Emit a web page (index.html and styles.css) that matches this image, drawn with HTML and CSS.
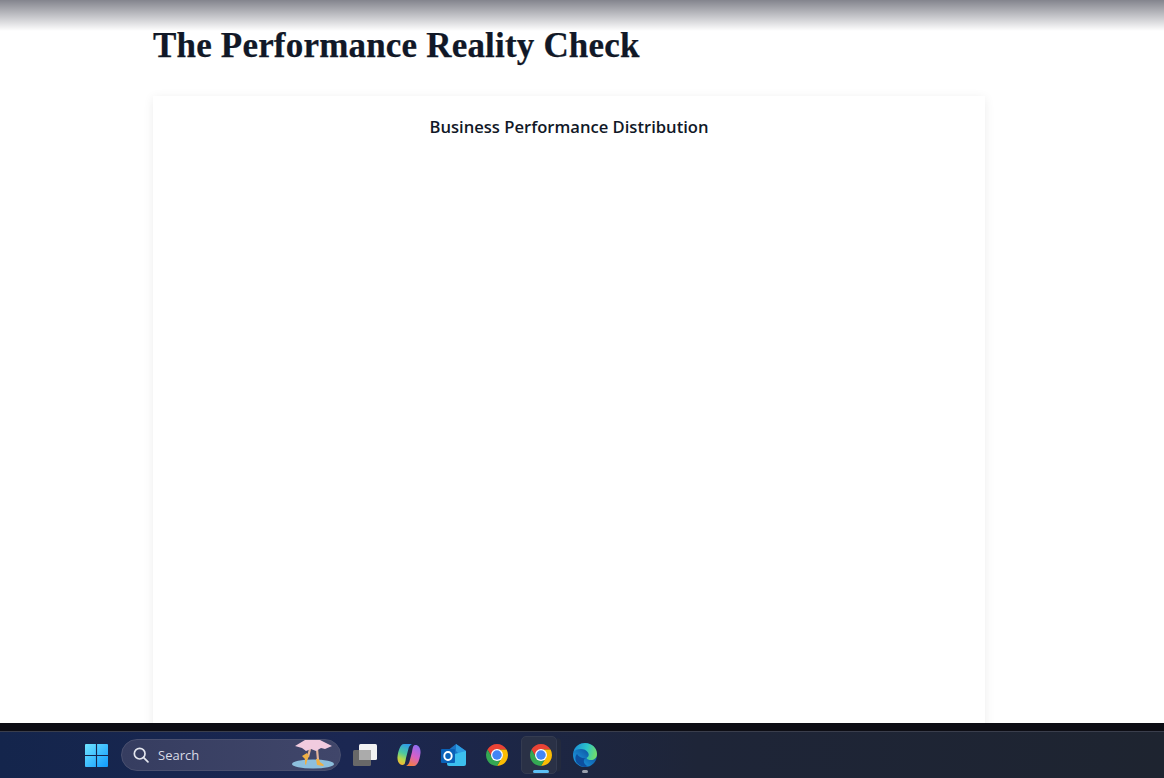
FILE: index.html
```html
<!DOCTYPE html>
<html lang="en">
<head>
    <meta charset="UTF-8">
    <meta name="viewport" content="width=device-width, initial-scale=1.0">
    <title>The Performance Reality Check</title>
    <link rel="stylesheet" href="styles.css">
</head>
<body>
    <div class="top-fade"></div>
    <main class="page">
        <h1 class="page-title">The Performance Reality Check</h1>
        <section class="chart-card">
            <h2 class="chart-title">Business Performance Distribution</h2>
        </section>
    </main>
    <div class="black-strip"></div>
    <footer class="taskbar">
        <svg class="win-logo" width="23" height="23" viewBox="0 0 24 24">
            <defs>
                <linearGradient id="winGrad" x1="0" y1="0" x2="1" y2="1">
                    <stop offset="0" stop-color="#6fe3ff"/>
                    <stop offset="1" stop-color="#0f9bff"/>
                </linearGradient>
            </defs>
            <path fill="url(#winGrad)" d="M0 1a1 1 0 0 1 1-1h10.400v11.400H0zM12.600 0H23a1 1 0 0 1 1 1v10.400H12.600zM0 12.600h11.400V24H1a1 1 0 0 1-1-1zM12.600 12.600H24V23a1 1 0 0 1-1 1H12.600z"/>
        </svg>
        <div class="search-box">
            <svg width="16" height="16" viewBox="0 0 18 18" fill="none" stroke="#e4e6ee" stroke-width="1.900">
                <circle cx="7.500" cy="7.500" r="6"/>
                <path d="M12 12 16.800 16.800" stroke-linecap="round"/>
            </svg>
            <span class="search-label">Search</span>
            <svg class="search-art" width="44" height="30" viewBox="0 0 44 30">
                <ellipse cx="21" cy="24" rx="21" ry="4.500" fill="#8dbfdd"/>
                <path d="M18 9 16 17M25 9l1 11" stroke="#e2b49a" stroke-width="2.200" fill="none"/>
                <path d="M3 6 13 0h15l12 6-7 3-4-1-5 3-5-2-5 2-4-3z" fill="#f1cbdf"/>
                <path d="M10 16 15 13l2 3-2 5-1 4-1-1 0-5z" fill="#efb044"/>
                <path d="M24 19l3 0 1 3 4 3-1 1-6-1z" fill="#efb044"/>
            </svg>
        </div>
        <svg class="task-icon view-icon" width="24" height="22" viewBox="0 0 24 22">
            <rect x="0" y="6" width="18" height="16" rx="1.500" fill="#686868"/>
            <rect x="6" y="0" width="18" height="16" rx="1.500" fill="#f2f2f2"/>
            <rect x="6" y="6" width="12" height="10" fill="#ababab"/>
        </svg>
        <svg class="task-icon copilot-icon" width="24" height="24" viewBox="0 0 24 24">
            <defs>
                <linearGradient id="copA" x1="0.600" y1="0" x2="0.300" y2="1">
                    <stop offset="0" stop-color="#2f9be8"/>
                    <stop offset="0.450" stop-color="#4cc9a0"/>
                    <stop offset="0.750" stop-color="#b8d84a"/>
                    <stop offset="1" stop-color="#f7b733"/>
                </linearGradient>
                <linearGradient id="copB" x1="0.700" y1="0" x2="0.300" y2="1">
                    <stop offset="0" stop-color="#8f6cf0"/>
                    <stop offset="0.500" stop-color="#d560c8"/>
                    <stop offset="1" stop-color="#f5803c"/>
                </linearGradient>
            </defs>
            <path fill="url(#copA)" d="M7 1H15C13 2 12 3.500 11.500 5.500L9 15C8.500 18 8 21 7 21.500 4 23 0 20 .5 14 1 9 3 1 7 1z"/>
            <path fill="url(#copB)" d="M17 23H9C11 22 12 20.500 12.500 18.500L15 9C15.500 6 16 3 17 2.500 20 1 24 4 23.500 10 23 15 21 23 17 23z"/>
        </svg>
        <svg class="task-icon outlook-icon" width="25" height="22" viewBox="0 0 25 22">
            <path d="M6 7 15 0l10 7v6H6z" fill="#1c74c4"/>
            <path d="M15 0l10 7-6 4-4-4z" fill="#2c9ce2"/>
            <path d="M6 12 25 7v13a2 2 0 0 1-2 2H8a2 2 0 0 1-2-2z" fill="#3cc0ee"/>
            <rect x="0" y="5" width="14" height="14" rx="1" fill="#0a62b8"/>
            <ellipse cx="7" cy="12" rx="3.700" ry="4" fill="none" stroke="#fff" stroke-width="1.900"/>
        </svg>
        <svg class="task-icon chrome-icon" width="24" height="24" viewBox="0 0 48 48">
            <path d="M4.950 13A22 22 0 0 1 43.050 13H24A11 11 0 0 0 14.500 29.500z" fill="#ea4335"/>
            <path d="M43.050 13A22 22 0 0 1 24 46L33.500 29.500A11 11 0 0 0 24 13z" fill="#fbbc04"/>
            <path d="M24 46A22 22 0 0 1 4.950 13L14.500 29.500A11 11 0 0 0 33.500 29.500z" fill="#34a853"/>
            <circle cx="24" cy="24" r="12" fill="#fff"/>
            <circle cx="24" cy="24" r="9.500" fill="#4285f4"/>
        </svg>
        <div class="active-app">
            <svg width="24" height="24" viewBox="0 0 48 48">
                <path d="M4.950 13A22 22 0 0 1 43.050 13H24A11 11 0 0 0 14.500 29.500z" fill="#ea4335"/>
                <path d="M43.050 13A22 22 0 0 1 24 46L33.500 29.500A11 11 0 0 0 24 13z" fill="#fbbc04"/>
                <path d="M24 46A22 22 0 0 1 4.950 13L14.500 29.500A11 11 0 0 0 33.500 29.500z" fill="#34a853"/>
                <circle cx="24" cy="24" r="12" fill="#fff"/>
                <circle cx="24" cy="24" r="9.500" fill="#4285f4"/>
            </svg>
            <span class="active-bar"></span>
        </div>
        <div class="edge-app">
            <svg width="24" height="24" viewBox="0 0 24 24">
                <defs>
                    <linearGradient id="edgeA" x1="0.800" y1="0.300" x2="0.200" y2="1">
                        <stop offset="0" stop-color="#0b4f9e"/>
                        <stop offset="1" stop-color="#1f9fe4"/>
                    </linearGradient>
                    <linearGradient id="edgeB" x1="0" y1="0.300" x2="1" y2="0.500">
                        <stop offset="0" stop-color="#1b8fd8"/>
                        <stop offset="0.550" stop-color="#2cc5c8"/>
                        <stop offset="1" stop-color="#72dc6a"/>
                    </linearGradient>
                </defs>
                <circle cx="12" cy="12" r="12" fill="url(#edgeA)"/>
                <path d="M.5 9C2 3 7 0 12 0c7 0 12 5 12 11 0 4-3 6-6 6-2 0-4-.6-4.500-2 2-1 3-3 1.500-5.500C13.500 7 10.500 6 8 6 4.500 6 2 7 .5 9z" fill="url(#edgeB)"/>
                <path d="M13.500 15c-2.500 .5-3.500 3-2 5.500 .8 1.300 2 2.300 3.500 3-3 1-7 .5-10-2.500C2 18.500 1.500 14 4 11c1.500 3 6 5 9.500 4z" fill="#0d4f9f"/>
            </svg>
            <span class="edge-dot"></span>
        </div>
    </footer>
</body>
</html>
```

FILE: styles.css
```css
html, body {
    height: 100%;
}
body {
    margin: 0;
    background-color: #fff;
    color: #111827;
    display: flex;
    flex-direction: column;
    overflow: hidden;
    position: relative;
}
.top-fade {
    position: absolute;
    top: 0;
    left: 0;
    right: 0;
    height: 31px;
    background: linear-gradient(to bottom, #83848d, #fff);
}
.page {
    flex: 1;
    min-height: 0;
    overflow: hidden;
    position: relative;
    padding: 0 179px 0 153px;
}
.page-title {
    font-family: "Liberation Serif", serif;
    font-size: 35px;
    font-weight: bold;
    letter-spacing: 0.19px;
    -webkit-text-stroke: 0.25px #111827;
    line-height: 40px;
    margin: 26px 0 30px;
    color: #111827;
}
.chart-card {
    height: 700px;
    padding-top: 19px;
    background-color: #fff;
    box-shadow: 0 2px 10px rgba(0,0,0,0.08);
}
.chart-title {
    font-family: "Open Sans", sans-serif;
    font-size: 16.6px;
    font-weight: 600;
    line-height: 24px;
    margin: 0;
    text-align: center;
    color: #111827;
}
.black-strip {
    height: 8px;
    background-color: #0d0d14;
}
.taskbar {
    height: 46px;
    border-top: 1px solid #3a3e4c;
    background: linear-gradient(to right, #14254c, #1b2752 30%, #1e2538 60%, #1e2430);
    display: flex;
    align-items: center;
    padding-left: 85px;
}
.win-logo {
    margin-right: 13px;
}
.search-box {
    width: 220px;
    height: 32px;
    box-sizing: border-box;
    border-radius: 16px;
    background: linear-gradient(to right, #363d60, #40466a);
    border: 1px solid #4a506f;
    display: flex;
    align-items: center;
    padding-left: 11px;
    position: relative;
    margin-right: 12px;
}
.search-label {
    font-family: "Open Sans", sans-serif;
    font-size: 13px;
    color: #d9dbe6;
    margin-left: 9px;
}
.search-art {
    position: absolute;
    left: 170px;
    top: 0;
}
.task-icon {
    flex: none;
}
.view-icon {
    margin-right: 20px;
}
.copilot-icon {
    margin-right: 20px;
}
.outlook-icon {
    margin-right: 19px;
}
.chrome-icon {
    margin-right: 12px;
}
.active-app {
    width: 36px;
    height: 38px;
    box-sizing: border-box;
    border-radius: 5px;
    background-color: #2a3146;
    border: 1px solid #343b50;
    display: flex;
    align-items: center;
    padding-left: 7px;
    position: relative;
    margin-right: 16px;
}
.active-app::after {
    content: "";
    position: absolute;
    top: 1px;
    bottom: 1px;
    right: -5px;
    width: 4px;
    border-radius: 0 5px 5px 0;
    background-color: #232a3e;
}
.active-bar {
    position: absolute;
    bottom: 0;
    left: 11px;
    width: 16px;
    height: 3px;
    border-radius: 2px;
    background-color: #5cc0f5;
}
.edge-app {
    position: relative;
    display: flex;
}
.edge-dot {
    position: absolute;
    left: 9px;
    bottom: -6px;
    width: 6px;
    height: 3px;
    border-radius: 2px;
    background-color: #9aa0ad;
}
```
